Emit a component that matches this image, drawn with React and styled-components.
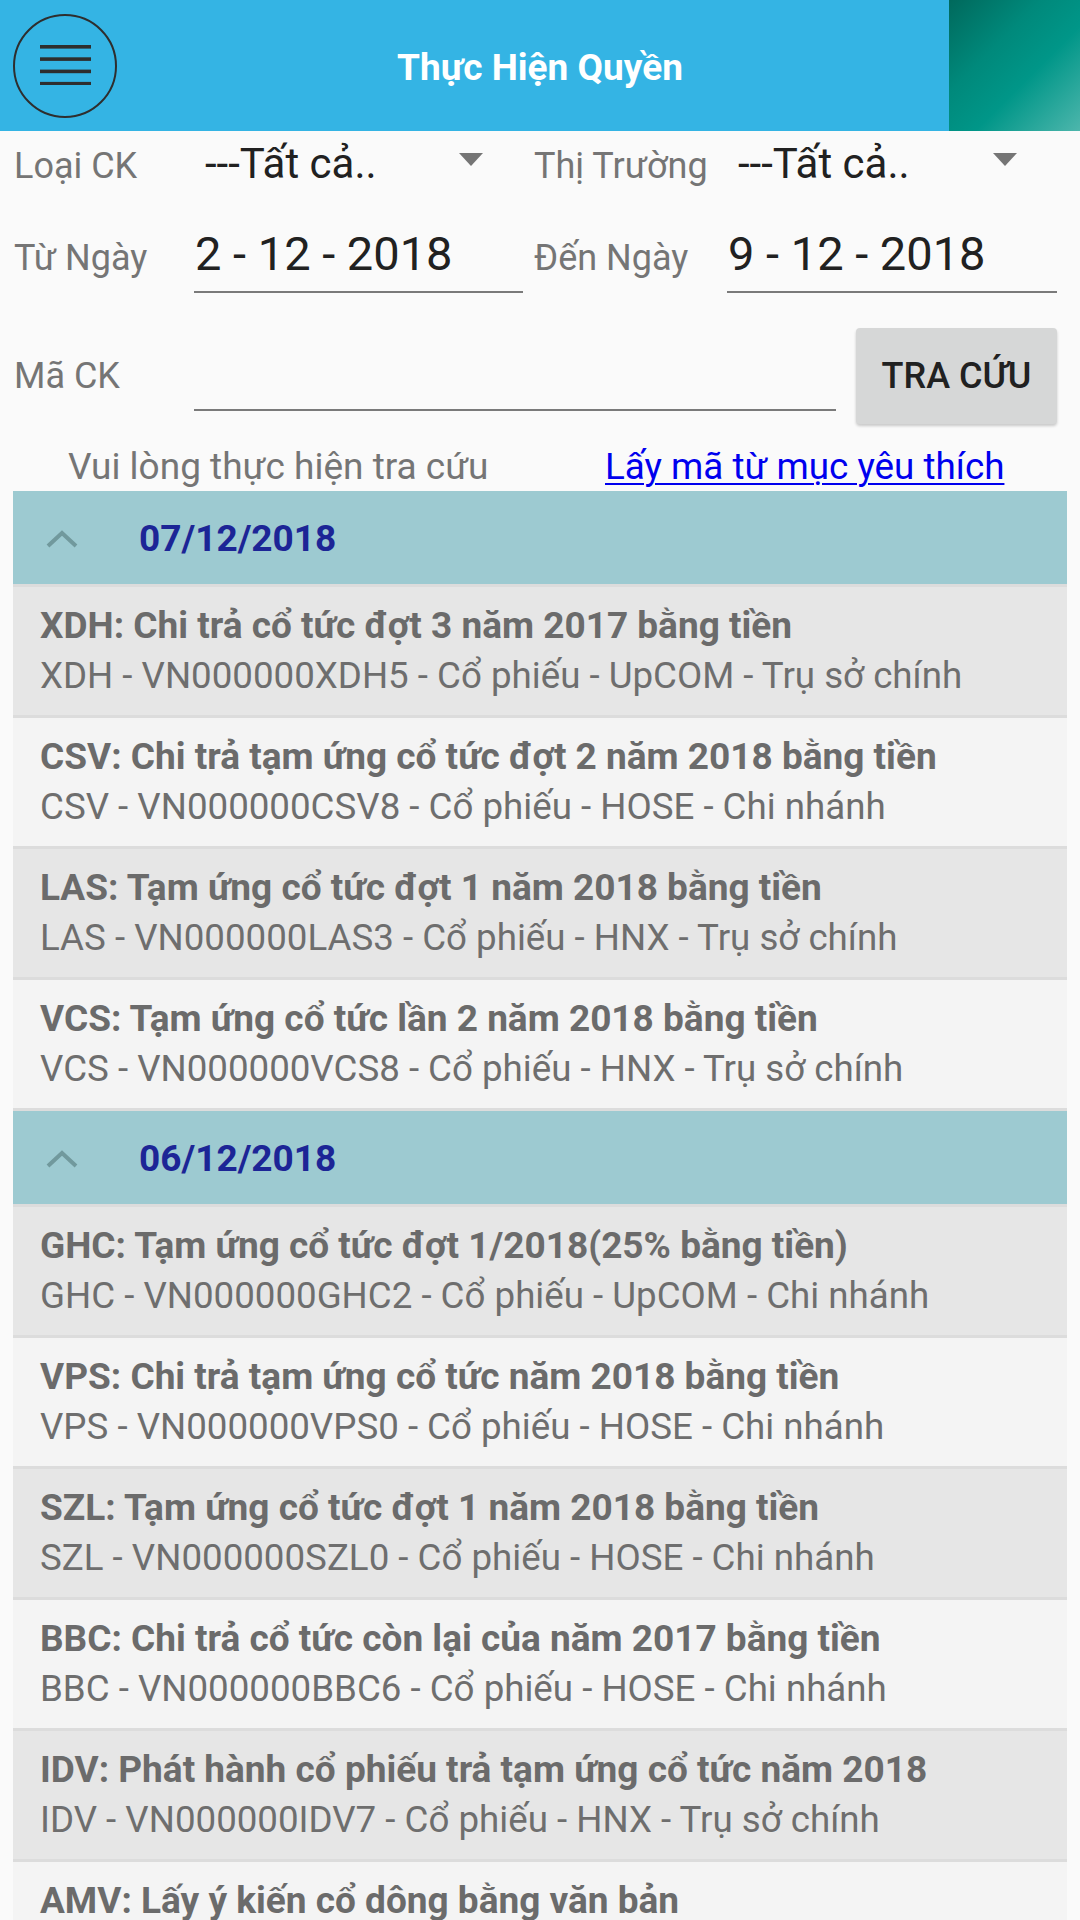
import styled, { createGlobalStyle } from 'styled-components'

const GlobalStyle = createGlobalStyle`
  html, body {
    margin: 0;
    padding: 0;
    background: #fafafa;
    font-family: Roboto, "Noto Sans", sans-serif;
  }
  #root {
    height: 1920px;
    overflow: hidden;
  }
`

const groups = [
  {
    date: '07/12/2018',
    items: [
      ['XDH: Chi trả cổ tức đợt 3 năm 2017 bằng tiền', 'XDH - VN000000XDH5 - Cổ phiếu - UpCOM - Trụ sở chính'],
      ['CSV: Chi trả tạm ứng cổ tức đợt 2 năm 2018 bằng tiền', 'CSV - VN000000CSV8 - Cổ phiếu - HOSE - Chi nhánh'],
      ['LAS: Tạm ứng cổ tức đợt 1 năm 2018 bằng tiền', 'LAS - VN000000LAS3 - Cổ phiếu - HNX - Trụ sở chính'],
      ['VCS: Tạm ứng cổ tức lần 2 năm 2018 bằng tiền', 'VCS - VN000000VCS8 - Cổ phiếu - HNX - Trụ sở chính'],
    ],
  },
  {
    date: '06/12/2018',
    items: [
      ['GHC: Tạm ứng cổ tức đợt 1/2018(25% bằng tiền)', 'GHC - VN000000GHC2 - Cổ phiếu - UpCOM - Chi nhánh'],
      ['VPS: Chi trả tạm ứng cổ tức năm 2018 bằng tiền', 'VPS - VN000000VPS0 - Cổ phiếu - HOSE - Chi nhánh'],
      ['SZL: Tạm ứng cổ tức đợt 1 năm 2018 bằng tiền', 'SZL - VN000000SZL0 - Cổ phiếu - HOSE - Chi nhánh'],
      ['BBC: Chi trả cổ tức còn lại của năm 2017 bằng tiền', 'BBC - VN000000BBC6 - Cổ phiếu - HOSE - Chi nhánh'],
      ['IDV: Phát hành cổ phiếu trả tạm ứng cổ tức năm 2018', 'IDV - VN000000IDV7 - Cổ phiếu - HNX - Trụ sở chính'],
      ['AMV: Lấy ý kiến cổ dông bằng văn bản', 'AMV - VN000000AMV1 - Cổ phiếu - HNX - Trụ sở chính'],
    ],
  },
]

export default function App() {
  return (
    <Page>
      <GlobalStyle />
      <Header>
        <MenuButton>
          <svg width="51" height="42" viewBox="0 0 51 42">
            <g fill="#2e2e2e">
              <rect x="0" y="2" width="51" height="3.6" />
              <rect x="0" y="14.3" width="51" height="3.6" />
              <rect x="0" y="26.6" width="51" height="3.6" />
              <rect x="0" y="38.9" width="51" height="3.6" />
            </g>
          </svg>
        </MenuButton>
        <Title>Thực Hiện Quyền</Title>
        <Corner />
      </Header>

      <Filters>
        <Row $mt={9}>
          <Label $w={180}>Loại CK</Label>
          <Spinner $w={329}>
            <SpinnerValue>---Tất cả..</SpinnerValue>
            <Caret />
          </Spinner>
          <Label $w={193} $ml={11}>Thị Trường</Label>
          <Spinner $w={330}>
            <SpinnerValue>---Tất cả..</SpinnerValue>
            <Caret />
          </Spinner>
        </Row>

        <Row $mt={36}>
          <Label $w={180}>Từ Ngày</Label>
          <DateField $w={329}>2 - 12 - 2018</DateField>
          <Label $w={193} $ml={11}>Đến Ngày</Label>
          <DateField $w={330}>9 - 12 - 2018</DateField>
        </Row>

        <SearchRow>
          <Label $w={180}>Mã CK</Label>
          <CodeInput />
          <SearchButton>TRA CỨU</SearchButton>
        </SearchRow>

        <HintRow>
          <Hint>Vui lòng thực hiện tra cứu</Hint>
          <FavLink>Lấy mã từ mục yêu thích</FavLink>
        </HintRow>
      </Filters>

      <List>
        {groups.map((g) => (
          <div key={g.date}>
            <GroupHeader>
              <svg width="32" height="18" viewBox="0 0 32 18">
                <polyline points="2,16 16,3 30,16" fill="none" stroke="#71999d" strokeWidth="4" />
              </svg>
              <GroupDate>{g.date}</GroupDate>
            </GroupHeader>
            {g.items.map((it, i) => (
              <Item key={it[0]} $dark={i % 2 === 0}>
                <ItemTitle>{it[0]}</ItemTitle>
                <ItemSub>{it[1]}</ItemSub>
              </Item>
            ))}
          </div>
        ))}
      </List>
    </Page>
  )
}

const Page = styled.div`
  width: 1080px;
  background: #fafafa;
`

const Header = styled.header`
  display: grid;
  grid-template-columns: 131px 1fr 131px;
  height: 131px;
  background: #34b4e4;
  align-items: center;
`

const MenuButton = styled.div`
  width: 104px;
  height: 104px;
  margin-left: 13px;
  border: 2.5px solid #2e2e2e;
  border-radius: 50%;
  display: flex;
  align-items: center;
  justify-content: center;
  box-sizing: border-box;
  padding-bottom: 4px;
`

const Title = styled.h1`
  margin: 0;
  text-align: center;
  color: #fff;
  font-size: 37px;
  font-weight: 700;
  padding-top: 3px;
`

const Corner = styled.div`
  height: 131px;
  background: linear-gradient(135deg, #00695c 0%, #00897b 35%, #009688 60%, #4db6ac 100%);
`

const Filters = styled.section`
  padding-left: 14px;
`

const Row = styled.div`
  display: flex;
  align-items: baseline;
  margin-top: ${(p) => p.$mt}px;
`

const Label = styled.span`
  width: ${(p) => p.$w}px;
  margin-left: ${(p) => p.$ml || 0}px;
  flex: none;
  color: #757575;
  font-size: 36px;
  line-height: 48px;
  white-space: nowrap;
`

const Spinner = styled.div`
  width: ${(p) => p.$w}px;
  flex: none;
  display: flex;
  align-items: baseline;
  padding-left: 11px;
  padding-right: 40px;
  box-sizing: border-box;
`

const SpinnerValue = styled.span`
  flex: 1;
  color: #212121;
  font-size: 42px;
  line-height: 48px;
`

const Caret = styled.span`
  width: 0;
  height: 0;
  border-left: 12.5px solid transparent;
  border-right: 12.5px solid transparent;
  border-top: 13px solid #757575;
  transform: translateY(-12px);
`

const DateField = styled.div`
  width: ${(p) => p.$w}px;
  flex: none;
  box-sizing: border-box;
  padding-left: 1px;
  padding-bottom: 9px;
  border-bottom: 2px solid #7a7a7a;
  color: #212121;
  font-size: 47px;
  line-height: 56px;
`

const SearchRow = styled.div`
  display: flex;
  align-items: center;
  margin-top: 35px;
  height: 96px;
`

const CodeInput = styled.div`
  width: 642px;
  height: 83px;
  align-self: flex-start;
  box-sizing: border-box;
  border-bottom: 2px solid #7a7a7a;
`

const SearchButton = styled.button`
  width: 201px;
  height: 96px;
  margin-left: 20px;
  border: none;
  border-radius: 4px;
  background: #d6d7d7;
  box-shadow: 0 2px 3px rgba(0, 0, 0, 0.2);
  color: #212121;
  font-family: Roboto, sans-serif;
  font-size: 36px;
  font-weight: 500;
  padding: 0;
`

const HintRow = styled.div`
  display: flex;
  margin-top: 19px;
  height: 48px;
  align-items: baseline;
`

const Hint = styled.span`
  margin-left: 54px;
  width: 537px;
  color: #757575;
  font-size: 37px;
  line-height: 48px;
`

const FavLink = styled.a`
  color: #0000ee;
  text-decoration: underline;
  text-decoration-thickness: 2px;
  text-underline-offset: 4px;
  font-size: 36.8px;
  line-height: 48px;
`

const List = styled.div`
  margin-left: 13px;
  width: 1054px;
`

const GroupHeader = styled.div`
  display: flex;
  align-items: center;
  height: 91px;
  padding-left: 33px;
  padding-top: 2px;
  box-sizing: content-box;
  background: #9dcad1;
  border-bottom: 3px solid #dcdcdc;
`

const GroupDate = styled.span`
  margin-left: 61px;
  color: #1c2596;
  font-size: 37px;
  font-weight: 700;
`

const Item = styled.div`
  height: 114px;
  padding: 14px 0 0 27px;
  box-sizing: content-box;
  background: ${(p) => (p.$dark ? '#e6e6e6' : '#f4f4f4')};
  border-bottom: 3px solid #dcdcdc;
`

const ItemTitle = styled.div`
  color: #6b6b6b;
  font-size: 37px;
  font-weight: 700;
  line-height: 50px;
  white-space: nowrap;
`

const ItemSub = styled.div`
  color: #6e6e6e;
  font-size: 36.7px;
  line-height: 50px;
  white-space: nowrap;
`
